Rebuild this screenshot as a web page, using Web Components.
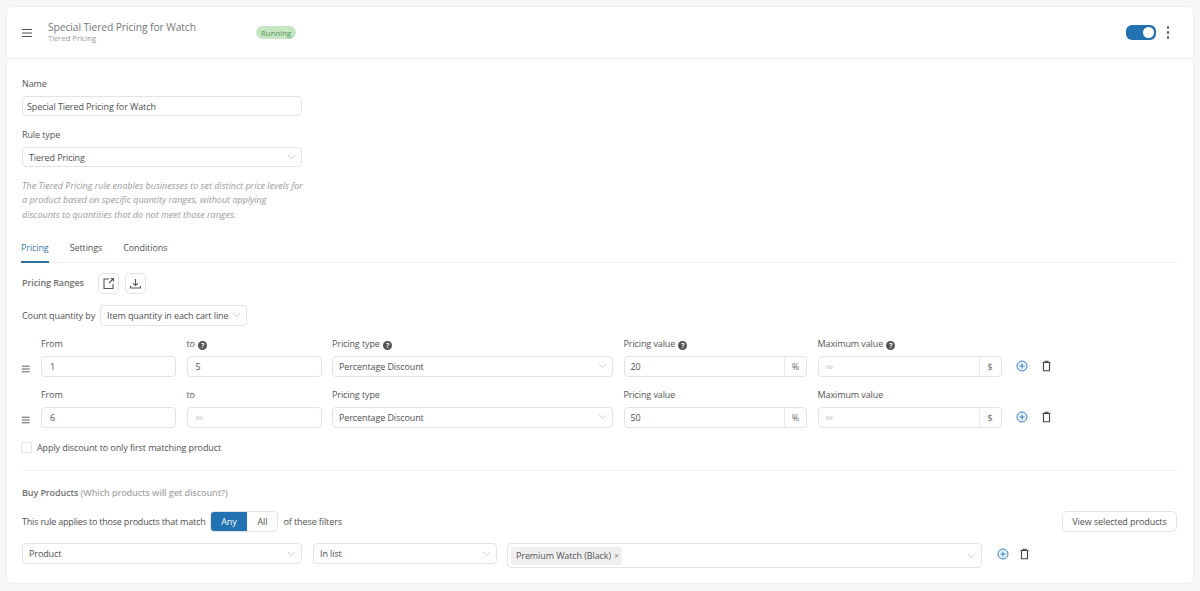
<!DOCTYPE html>
<html lang="en">
<head>
<meta charset="utf-8">
<title>Special Tiered Pricing for Watch</title>
<style>
    html, body { margin: 0; height: 100%; }
    body {
        background: #f6f6f6;
        color: #505050;
        font-family: "Open Sans", "Noto Sans", sans-serif;
        font-size: 9px;
        letter-spacing: -0.1px;
        overflow: hidden;
    }
</style>
</head>
<body>

<rule-card>
    <card-header slot="header" title="Special Tiered Pricing for Watch" subtitle="Tiered Pricing" status="Running"></card-header>

    <form-field label="Name"><text-box value="Special Tiered Pricing for Watch"></text-box></form-field>
    <form-field label="Rule type" style="margin-top:12px"><select-box value="Tiered Pricing"></select-box></form-field>
    <rule-hint>The Tiered Pricing rule enables businesses to set distinct price levels for a product based on specific quantity ranges, without applying discounts to quantities that do not meet those ranges.</rule-hint>

    <tab-bar items="Pricing,Settings,Conditions"></tab-bar>

    <ranges-toolbar></ranges-toolbar>
    <count-by value="Item quantity in each cart line"></count-by>

    <range-row from="1" to="5" value="20" help></range-row>
    <range-row from="6" value="50"></range-row>

    <check-line>Apply discount to only first matching product</check-line>
    <section-rule></section-rule>

    <section-title note="(Which products will get discount?)">Buy Products</section-title>
    <match-line></match-line>
    <filter-row></filter-row>
</rule-card>

<script>
    const icons = {
        menu: '<svg width="12" height="12" viewBox="0 0 12 12" fill="none" stroke="#555" stroke-width="1.2"><path d="M1 2.5h10M1 6h10M1 9.5h10"/></svg>',
        chevron: '<svg width="9" height="6" viewBox="0 0 9 6" fill="none" stroke="#d2d2d2" stroke-width="1"><path d="M1 1l3.5 3.5L8 1"/></svg>',
        open: '<svg width="13" height="13" viewBox="0 0 13 13" fill="none" stroke="#555" stroke-width="1.1"><path d="M7 2H2v9.5h9V7M8.5 1.5h3v3M11.5 1.5L7 6"/></svg>',
        download: '<svg width="13" height="13" viewBox="0 0 13 13" fill="none" stroke="#555" stroke-width="1.1"><path d="M6.5 2v6.5M4 6.200l2.500 2.400L9 6.200M1.500 9v2h10V9"/></svg>',
        plus: '<svg width="12" height="12" viewBox="0 0 12 12" fill="#eaf2fa" stroke="#3b82c4" stroke-width="1"><circle cx="6" cy="6" r="5"/><path d="M6 3.5v5M3.5 6h5" fill="none"/></svg>',
        trash: '<svg width="11" height="12" viewBox="0 0 11 12" fill="none" stroke="#444" stroke-width="1.1"><path d="M1.500 2.500h8M4 2.500V1.200h3v1.300M2.500 2.500v8.300h6V2.500"/></svg>'
    };

    const boxStyles = `
        .box {
            box-sizing: border-box;
            display: flex;
            align-items: center;
            height: 100%;
            background: #fff;
            border: 1px solid #e3e3e3;
            border-radius: 4px;
            padding: 0 6px;
            color: #505050;
            white-space: nowrap;
        }
    `;

    // petite base pour eviter de repeter attachShadow partout
    class ShadowBase extends HTMLElement {
        constructor() {
            super();
            this.attachShadow({ mode: 'open' });
        }

        connectedCallback() {
            this.shadowRoot.innerHTML = this.render();
        }

        attr(name, fallback = '') {
            return this.hasAttribute(name) ? this.getAttribute(name) : fallback;
        }
    }

    class RuleCard extends ShadowBase {
        render() {
            return `
                <style>
                    :host {
                        display: block;
                        box-sizing: border-box;
                        margin: 6px;
                        height: 578px;
                        background: #fff;
                        border: 1px solid #efefef;
                        border-radius: 5px;
                    }
                    .body { padding: 18px 16px 0 15px; }
                </style>
                <slot name="header"></slot>
                <div class="body"><slot></slot></div>
            `;
        }
    }

    class CardHeader extends ShadowBase {
        render() {
            return `
                <style>
                    :host {
                        display: flex;
                        align-items: center;
                        box-sizing: border-box;
                        height: 52px;
                        padding: 0 24px 0 14px;
                        border-bottom: 1px solid #eeeeee;
                    }
                    .titles { margin-left: 15px; width: 208px; color: #777; margin-top: -2px; }
                    .title { font-size: 10.3px; line-height: 14px; }
                    .sub { font-size: 7.8px; line-height: 9px; color: #999; }
                    .pill {
                        background: #c4e6c3;
                        color: #5f8f5e;
                        border-radius: 7px;
                        font-size: 8px;
                        line-height: 13px;
                        padding: 0 5px;
                    }
                    .end { margin-left: auto; display: flex; align-items: center; gap: 11px; }
                    .dots { display: flex; flex-direction: column; gap: 2.5px; }
                    .dots i { width: 2.5px; height: 2.5px; border-radius: 50%; background: #555; }
                    svg { display: block; }
                </style>
                ${icons.menu}
                <div class="titles">
                    <div class="title">${this.attr('title')}</div>
                    <div class="sub">${this.attr('subtitle')}</div>
                </div>
                <span class="pill">${this.attr('status')}</span>
                <div class="end">
                    <toggle-switch></toggle-switch>
                    <div class="dots"><i></i><i></i><i></i></div>
                </div>
            `;
        }
    }

    class ToggleSwitch extends ShadowBase {
        render() {
            return `
                <style>
                    :host {
                        display: flex;
                        align-items: center;
                        justify-content: flex-end;
                        box-sizing: border-box;
                        width: 30px;
                        height: 15px;
                        padding-right: 2px;
                        background: #2271b1;
                        border-radius: 6px;
                    }
                    i { width: 11px; height: 11px; border-radius: 50%; background: #fff; }
                </style>
                <i></i>
            `;
        }
    }

    class FormField extends ShadowBase {
        render() {
            return `
                <style>
                    :host { display: block; width: 280px; }
                    label { display: block; line-height: 13px; margin-bottom: 6px; color: #555; }
                    ::slotted(*) { height: 20px; }
                </style>
                <label>${this.attr('label')}</label>
                <slot></slot>
            `;
        }
    }

    class TextBox extends ShadowBase {
        render() {
            const empty = !this.hasAttribute('value');
            return `
                <style>
                    ${boxStyles}
                    :host { display: block; min-width: 0; }
                    .box { padding-left: ${this.attr('pad', '4')}px; }
                    .inf { color: #c2c2c2; font-size: 11px; }
                    .suffix {
                        margin-left: auto;
                        margin-right: -6px;
                        align-self: stretch;
                        width: 21px;
                        display: flex;
                        align-items: center;
                        justify-content: center;
                        border-left: 1px solid #e9e9e9;
                        color: #666;
                    }
                </style>
                <div class="box">
                    <span class="${empty ? 'inf' : ''}">${empty ? '∞' : this.attr('value')}</span>
                    ${this.hasAttribute('suffix') ? `<span class="suffix">${this.attr('suffix')}</span>` : ''}
                </div>
            `;
        }
    }

    class SelectBox extends ShadowBase {
        render() {
            return `
                <style>
                    ${boxStyles}
                    :host { display: block; min-width: 0; }
                    .chev { margin-left: auto; margin-right: -1px; display: flex; }
                </style>
                <div class="box">
                    <span>${this.attr('value')}</span><slot></slot>
                    <span class="chev">${icons.chevron}</span>
                </div>
            `;
        }
    }

    class RuleHint extends ShadowBase {
        render() {
            return `
                <style>
                    :host {
                        display: block;
                        width: 284px;
                        margin-top: 11.5px;
                        font-style: italic;
                        font-size: 9px;
                        letter-spacing: 0;
                        line-height: 14.5px;
                        color: #9a9a9a;
                    }
                </style>
                <slot></slot>
            `;
        }
    }

    class TabBar extends ShadowBase {
        render() {
            const tabs = this.attr('items').split(',').map((item, index) =>
                `<span class="${index === 0 ? 'active' : ''}">${item}</span>`).join('');
            return `
                <style>
                    :host {
                        display: flex;
                        gap: 21px;
                        margin-top: 17.5px;
                        margin-left: -1px;
                        height: 23px;
                        box-sizing: border-box;
                        border-bottom: 1px solid #eeeeee;
                    }
                    span { line-height: 13px; padding-top: 1px; color: #555; height: 21px; box-sizing: border-box; }
                    .active { color: #3d7cae; border-bottom: 2px solid #2d6f9f; height: 23px; }
                </style>
                ${tabs}
            `;
        }
    }

    class RangesToolbar extends ShadowBase {
        render() {
            return `
                <style>
                    :host { display: flex; align-items: center; margin-top: 10px; height: 21px; color: #707070; font-weight: 600; }
                    .label { width: 76px; margin-top: -2px; }
                    button {
                        width: 21px;
                        height: 21px;
                        margin-right: 6px;
                        padding: 0;
                        display: flex;
                        align-items: center;
                        justify-content: center;
                        background: #fff;
                        border: 1px solid #e3e3e3;
                        border-radius: 5px;
                    }
                </style>
                <span class="label">Pricing Ranges</span>
                <button type="button">${icons.open}</button>
                <button type="button">${icons.download}</button>
            `;
        }
    }

    class CountBy extends ShadowBase {
        render() {
            return `
                <style>
                    :host { display: flex; align-items: center; margin-top: 11px; height: 21px; white-space: nowrap; }
                    .label { width: 78px; flex: none; }
                    select-box { width: 147px; height: 21px; }
                </style>
                <span class="label">Count quantity by</span>
                <select-box value="${this.attr('value')}"></select-box>
            `;
        }
    }

    class HelpDot extends ShadowBase {
        render() {
            return `
                <style>
                    :host {
                        display: inline-flex;
                        align-items: center;
                        justify-content: center;
                        width: 9px;
                        height: 9px;
                        margin-left: 1px;
                        border-radius: 50%;
                        background: #555;
                        color: #fff;
                        font-size: 7px;
                        line-height: 9px;
                        font-weight: 700;
                        vertical-align: -1px;
                    }
                </style>
                ?
            `;
        }
    }

    class RangeRow extends ShadowBase {
        render() {
            const help = this.hasAttribute('help') ? '<help-dot></help-dot>' : '';
            const to = this.hasAttribute('to') ? `value="${this.attr('to')}"` : '';
            return `
                <style>
                    :host {
                        display: grid;
                        grid-template-columns: 8.5px 135px 135px 281px 183.5px 184px auto;
                        column-gap: 10.5px;
                        grid-template-rows: 13px 21px;
                        row-gap: 6px;
                        margin-top: 11px;
                    }
                    .grip { grid-row: 2; grid-column: 1; display: flex; align-items: center; padding-top: 6px; margin-left: -1px; }
                    label { line-height: 13px; color: #555; grid-row: 1; white-space: nowrap; }
                    .actions { grid-row: 2; grid-column: 7; display: flex; align-items: center; gap: 13px; padding-left: 4px; }
                    text-box, select-box { grid-row: 2; height: 21px; }
                    svg { display: block; }
                </style>
                <label style="grid-column:2">From</label>
                <label style="grid-column:3">to ${help}</label>
                <label style="grid-column:4">Pricing type ${help}</label>
                <label style="grid-column:5">Pricing value ${help}</label>
                <label style="grid-column:6">Maximum value ${help}</label>
                <span class="grip">${icons.menu}</span>
                <text-box style="grid-column:2" pad="8" value="${this.attr('from')}"></text-box>
                <text-box style="grid-column:3" pad="8" ${to}></text-box>
                <select-box style="grid-column:4" value="Percentage Discount"></select-box>
                <text-box style="grid-column:5" pad="6" value="${this.attr('value')}" suffix="%"></text-box>
                <text-box style="grid-column:6" pad="7" suffix="$"></text-box>
                <div class="actions">${icons.plus}${icons.trash}</div>
            `;
        }
    }

    class CheckLine extends ShadowBase {
        render() {
            return `
                <style>
                    :host { display: flex; align-items: center; gap: 5px; margin-top: 13px; height: 13px; }
                    i { box-sizing: border-box; width: 11px; height: 11px; border: 1px solid #e2e2e2; border-radius: 2px; background: #fff; margin-left: -1px; }
                </style>
                <i></i><span><slot></slot></span>
            `;
        }
    }

    class SectionRule extends ShadowBase {
        render() {
            return `
                <style>
                    :host { display: block; height: 1px; background: #eeeeee; margin-top: 16.5px; }
                </style>
            `;
        }
    }

    class SectionTitle extends ShadowBase {
        render() {
            return `
                <style>
                    :host { display: block; margin-top: 15px; line-height: 13px; font-weight: 600; color: #707070; }
                    span { color: #a8a8a8; }
                </style>
                <slot></slot> <span>${this.attr('note')}</span>
            `;
        }
    }

    class MatchLine extends ShadowBase {
        render() {
            return `
                <style>
                    ${boxStyles}
                    :host { display: flex; align-items: center; margin-top: 12px; height: 21px; }
                    .lead { letter-spacing: -0.2px; }
                    .seg { display: flex; width: 68px; height: 21px; margin: 0 5px; border: 1px solid #e3e3e3; border-radius: 4px; box-sizing: border-box; overflow: hidden; }
                    .seg span { display: flex; align-items: center; justify-content: center; }
                    .any { width: 37px; margin: -1px 0 -1px -1px; background: #2271b1; color: #fff; }
                    .all { flex: 1; }
                    .view { margin-left: auto; height: 21px; width: 115px; justify-content: center; border-radius: 5px; }
                </style>
                <span class="lead">This rule applies to those products that match</span>
                <div class="seg"><span class="any">Any</span><span class="all">All</span></div>
                <span>of these filters</span>
                <div class="box view">View selected products</div>
            `;
        }
    }

    class TagChip extends ShadowBase {
        render() {
            return `
                <style>
                    :host {
                        display: inline-flex;
                        align-items: center;
                        gap: 3px;
                        height: 18px;
                        margin-left: -3px;
                        padding: 0 3px 0 5px;
                        background: #f0f0f0;
                        border-radius: 3px;
                        color: #555;
                    }
                    i { font-style: normal; color: #888; }
                </style>
                <slot></slot><i>×</i>
            `;
        }
    }

    class FilterRow extends ShadowBase {
        render() {
            return `
                <style>
                    :host { display: flex; align-items: flex-start; margin-top: 11px; }
                    select-box { height: 21px; }
                    .tags { height: 25px; width: 475px; margin-left: 10px; }
                    .actions { display: flex; align-items: center; gap: 10px; height: 21px; margin-left: 15px; }
                    svg { display: block; }
                </style>
                <select-box value="Product" style="width:280px"></select-box>
                <select-box value="In list" style="width:184px;margin-left:11px"></select-box>
                <select-box class="tags"><tag-chip>Premium Watch (Black)</tag-chip></select-box>
                <div class="actions">${icons.plus}${icons.trash}</div>
            `;
        }
    }

    customElements.define('rule-card', RuleCard);
    customElements.define('card-header', CardHeader);
    customElements.define('toggle-switch', ToggleSwitch);
    customElements.define('form-field', FormField);
    customElements.define('text-box', TextBox);
    customElements.define('select-box', SelectBox);
    customElements.define('rule-hint', RuleHint);
    customElements.define('tab-bar', TabBar);
    customElements.define('ranges-toolbar', RangesToolbar);
    customElements.define('count-by', CountBy);
    customElements.define('help-dot', HelpDot);
    customElements.define('range-row', RangeRow);
    customElements.define('check-line', CheckLine);
    customElements.define('section-rule', SectionRule);
    customElements.define('section-title', SectionTitle);
    customElements.define('match-line', MatchLine);
    customElements.define('tag-chip', TagChip);
    customElements.define('filter-row', FilterRow);
</script>
</body>
</html>
